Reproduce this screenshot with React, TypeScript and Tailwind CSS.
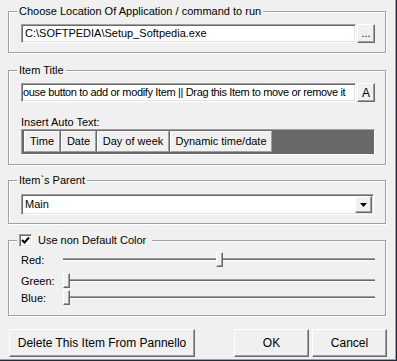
import React from 'react';

const sunken =
  'border border-t-[#a0a0a0] border-l-[#a0a0a0] border-r-white border-b-white shadow-[inset_1px_1px_0_#696969,inset_-1px_-1px_0_#e3e3e3]';
const raised =
  'border border-t-white border-l-white border-r-[#696969] border-b-[#696969] shadow-[inset_-1px_-1px_0_#a0a0a0] bg-[#f0f0f0]';

const Group = ({ title, className, children }: { title: React.ReactNode; className: string; children: React.ReactNode }) => (
  <div className={`relative border border-[#a0a0a0] shadow-[inset_1px_1px_0_#fff,1px_1px_0_#fff] ${className}`}>
    <div className="absolute left-[8px] -top-[8px] bg-[#f0f0f0] px-[2px] leading-[14px] flex items-center">{title}</div>
    {children}
  </div>
);

const Slider = ({ label, value }: { label: string; value: number }) => (
  <div className="flex items-center h-[16px]">
    <span className="w-[42px] leading-[13px]">{label}</span>
    <div className="relative flex-1 h-full">
      <div className="absolute left-0 right-0 top-[6px] h-[3px] border-t border-t-[#a0a0a0] border-b border-b-white bg-[#696969]" />
      <div
        className={`absolute top-0 w-[7px] h-[15px] ${raised}`}
        style={{ left: `${Math.round((value / 255) * 304)}px` }}
      />
    </div>
  </div>
);

export default function App() {
  return (
    <div className="relative w-[397px] h-[361px] bg-[#f0f0f0] text-black text-[11px] font-['Liberation_Sans',sans-serif] border-r border-b border-[#232b3a] shadow-[inset_-1px_-1px_0_#a0a0a0] overflow-hidden">
      <div className="flex flex-col pl-[8px] pr-[10px] pt-[11px]">
        <Group title="Choose Location Of Application / command to run" className="h-[42px] pt-[12px] pl-[12px] pr-[10px]">
          <div className="flex gap-[1px]">
            <div className={`flex-1 h-[19px] bg-white flex items-center px-[3px] ${sunken}`}>C:\SOFTPEDIA\Setup_Softpedia.exe</div>
            <div className={`w-[18px] h-[19px] flex items-end justify-center pb-[3px] leading-none ${raised}`}>...</div>
          </div>
        </Group>

        <Group title="Item Title" className="mt-[17px] h-[95px] pt-[12px] pl-[12px] pr-[10px]">
          <div className="flex gap-[1px]">
            <div className={`flex-1 min-w-0 h-[19px] bg-white flex items-center px-[1px] overflow-hidden whitespace-nowrap tracking-[-0.35px] ${sunken}`}>
              ouse button to add or modify Item || Drag this Item to move or remove it
            </div>
            <div className={`w-[18px] h-[19px] flex items-center justify-center text-[12px] ${raised}`}>A</div>
          </div>
          <div className="mt-[14px] leading-[13px]">Insert Auto Text:</div>
          <div className="h-[26px] bg-[#696969] border border-t-[#a0a0a0] border-l-[#a0a0a0] border-r-white border-b-white pt-[1px] pl-[2px] flex gap-[1px]">
            {[
              ['Time', 'w-[36px]'],
              ['Date', 'w-[35px]'],
              ['Day of week', 'w-[72px]'],
              ['Dynamic time/date', 'w-[102px]'],
            ].map(([t, w]) => (
              <div key={t} className={`${w} h-[21px] flex items-center justify-center bg-[#f0f0f0] border border-t-white border-l-white border-r-[#a0a0a0] border-b-[#a0a0a0]`}>
                {t}
              </div>
            ))}
          </div>
        </Group>

        <Group title="Item`s Parent" className="mt-[15px] h-[44px] pt-[13px] pl-[12px] pr-[11px]">
          <div className={`h-[21px] bg-white flex items-center pl-[3px] pr-[1px] ${sunken}`}>
            <span className="flex-1">Main</span>
            <div className={`w-[17px] h-[17px] flex items-center justify-center ${raised}`}>
              <svg width="7" height="4" viewBox="0 0 7 4"><path d="M0 0h7L3.5 4z" fill="#000" /></svg>
            </div>
          </div>
        </Group>

        <Group
          title={
            <span className="flex items-center gap-[6px] pr-[4px]">
              <span className={`w-[13px] h-[13px] bg-white flex items-center justify-center ${sunken}`}>
                <svg width="9" height="9" viewBox="0 0 9 9">
                  <path d="M1 4l2.5 2.5L8 1.5" stroke="#000" strokeWidth="2" fill="none" />
                </svg>
              </span>
              <span>Use non Default Color</span>
            </span>
          }
          className="mt-[16px] h-[76px] pl-[12px] pr-[10px]"
        >
          <div className="mt-[11px]"><Slider label="Red:" value={128} /></div>
          <div className="mt-[5px]"><Slider label="Green:" value={0} /></div>
          <div className="mt-[1px]"><Slider label="Blue:" value={0} /></div>
        </Group>

        <div className="mt-[13px] flex">
          <div className={`ml-[1px] w-[186px] h-[28px] flex items-center justify-center text-[12px] ${raised}`}>Delete This Item From Pannello</div>
          <div className={`ml-auto w-[75px] h-[28px] flex items-center justify-center text-[12px] ${raised}`}>OK</div>
          <div className={`ml-[3px] -mr-[1px] w-[75px] h-[28px] flex items-center justify-center text-[12px] ${raised}`}>Cancel</div>
        </div>
      </div>
    </div>
  );
}
